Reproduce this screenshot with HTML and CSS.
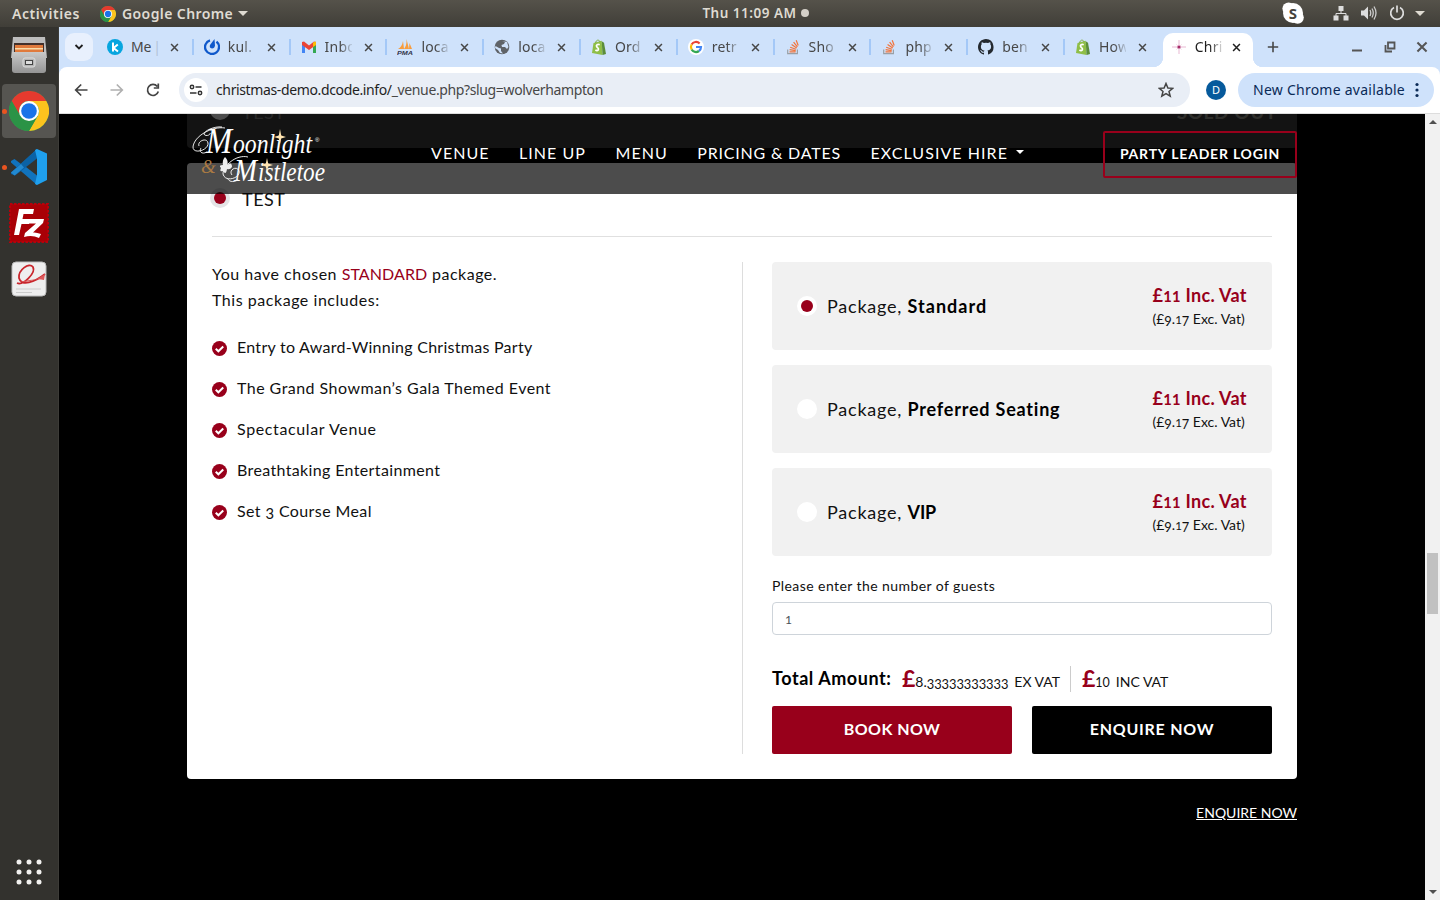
FILE: index.html
```html
<!DOCTYPE html>
<html lang="en">
<head>
<meta charset="utf-8">
<title>Moonlight &amp; Mistletoe - Wolverhampton</title>
<link rel="stylesheet" href="styles.css">
</head>
<body>
<svg class="defs" aria-hidden="true">
  <symbol id="chrome" viewBox="0 0 48 48">
    <circle cx="24" cy="24" r="24" fill="#34a04f"/>
    <path d="M3.2 12A24 24 0 0 1 44.8 12H24A12 12 0 0 0 13.6 30Z" fill="#e53a2e"/>
    <path d="M44.8 12A24 24 0 0 1 24 48L34.4 30A12 12 0 0 0 34.4 18L24 12Z" fill="#fcc31e"/>
    <path d="M3.2 12A24 24 0 0 0 24 48L34.4 30 24 34 13.6 30Z" fill="#2b9346"/>
    <circle cx="24" cy="24" r="12" fill="#fff"/><circle cx="24" cy="24" r="9.4" fill="#1a73e8"/>
  </symbol>
  <symbol id="x" viewBox="0 0 10 10"><path d="M1.2 1.2 8.8 8.8M8.8 1.2 1.2 8.8" stroke="currentColor" stroke-width="1.7"/></symbol>
  <symbol id="shop" viewBox="0 0 16 16">
    <path d="M2.5 4 10.7 1.7 11.6 16 1 14Z" fill="#8fbe47"/><path d="M10.7 2.2 13 3.8 15 15 11.6 16Z" fill="#5b8d3a"/>
    <path d="M4.6 4C5 .6 8 .2 9.2 3" fill="none" stroke="#7fae3e"/>
    <path d="M8.7 5.7C6.6 4.8 5 6 5.6 7.4 6 8.7 8 9 7.4 10.6 6.9 11.9 5.5 11.8 4.4 11" fill="none" stroke="#fff" stroke-width="1.7"/>
  </symbol>
  <symbol id="stack" viewBox="0 0 16 16">
    <path d="M2.7 10.5V14.7H12.4V10.5" fill="none" stroke="#9aa0a6" stroke-width="1.2"/>
    <path d="M4.5 12.8H10.6M4.6 10.6 10.7 11.6M5.2 8.2 11 10.3M6.6 5.6 11.7 9M8.6 3.2 12.4 7.8M11.2 1.2 13.2 6.5" stroke="#f2743c" stroke-width="1.2"/>
  </symbol>
  <symbol id="check" viewBox="0 0 16 16"><circle cx="8" cy="8" r="8" fill="#98001b"/><path d="M4 8.2 6.8 11 12 5.8" fill="none" stroke="#fff" stroke-width="2.1"/></symbol>
</svg>

<header class="topbar">
  <div class="topbar-left">
    <span class="activities">Activities</span>
    <svg width="16" height="16"><use href="#chrome"/></svg>
    <span class="app-name">Google Chrome</span>
    <i class="caret caret-light"></i>
  </div>
  <div class="clock">Thu 11:09 AM<i></i></div>
  <div class="tray">
    <svg class="skype" width="22" height="22" viewBox="0 0 22 22"><circle cx="11" cy="11" r="10" fill="#fff"/><circle cx="6.6" cy="6.6" r="6.2" fill="#fff"/><circle cx="15.6" cy="15.6" r="6.2" fill="#fff"/><text x="11" y="16.5" text-anchor="middle">S</text></svg>
    <svg width="16" height="16" viewBox="0 0 16 16"><path d="M5.5 1H10.5V6H5.5ZM.5 10.500H5.500V15.500H.5ZM10.500 10.500H15.500V15.500H10.500Z" fill="#ddd"/><path d="M8 6V8.500M3 11V8.500H13V11" fill="none" stroke="#ddd"/></svg>
    <svg width="16" height="16" viewBox="0 0 16 16"><path d="M0 5.500H3L7 1.500V14.500L3 10.500H0Z" fill="#ddd"/><path d="M9 5Q10.500 8 9 11M11 3.500Q13.500 8 11 12.500M13 1.500Q17 8 13 14.500" fill="none" stroke="#ccc" stroke-width="1.300"/></svg>
    <svg width="16" height="16" viewBox="0 0 16 16"><path d="M5 2.500A6.300 6.300 0 1 0 11 2.500M8 .5V7.500" fill="none" stroke="#ddd" stroke-width="1.700"/></svg>
    <i class="caret caret-light"></i>
  </div>
</header>

<div class="desktop">
  <aside class="dock">
    <div class="dock-item"><svg width="36" height="38" viewBox="0 0 36 38">
      <defs><linearGradient id="steel" x2="0" y2="1"><stop stop-color="#c9c9c9"/><stop offset="1" stop-color="#949494"/></linearGradient></defs>
      <path d="M2 1H34L36 22H0Z" fill="#bdbdbd"/><path d="M3 7H33V17H3Z" fill="#43302a"/><path d="M4 9H32V16H4Z" fill="#e07a3c"/><path d="M4 12H32V13.500H4Z" fill="#f9dca8"/>
      <path d="M1 16H35V34Q35 37 32 37H4Q1 37 1 34Z" fill="url(#steel)"/><rect x="12" y="22" width="12" height="9" rx="2" fill="#b5b5b5" stroke="#dedede"/><rect x="14.500" y="24.500" width="7" height="4" fill="#ddd" stroke="#444"/></svg></div>
    <div class="dock-item running active"><svg width="40" height="40"><use href="#chrome"/></svg></div>
    <div class="dock-item running"><svg width="36" height="36" viewBox="0 0 36 36"><path d="M26 0 10 15 3.500 10 0 12V13.500L26 36Z" fill="#1173bd"/><path d="M0 23.500 26 0V10L4 26.500 0 25Z" fill="#0b62a5"/><path d="M26 0 36 4.500V31L26 36 24 35 26 26V9.500L24 1Z" fill="#1fa0ee"/><path d="M26 9.500V26.500L15 18Z" fill="#33332f"/><path d="M0 23.500 10 15 13 18.500 3.500 26.500Z" fill="#2289d0"/></svg></div>
    <div class="dock-item"><svg width="40" height="40" viewBox="0 0 40 40"><rect x="1" y="1" width="38" height="38" fill="#a90006" stroke="#b9000a" stroke-width="2" stroke-dasharray="2.500 1.500"/><path d="M10 6H25L24 11H14.500L13.500 16H21L20 21H12.500L10 32H5Z" fill="#fff"/><path d="M20 16H35L34 20 24 29.500Q27 29 32 31L30 35Q23 31.500 15 34L16 30 27 20.500H19Z" fill="#fff"/></svg></div>
    <div class="dock-item"><svg width="36" height="36" viewBox="0 0 36 36"><rect x="1" y="1" width="34" height="34" rx="4" fill="#eee" stroke="#bbb"/><path d="M6 22C12 25 25 12 22 6 18 1 7 9 8 17 10 26 24 21 34 13" fill="none" stroke="#c9252b" stroke-width="1.800"/><path d="M9 21Q22 22 34 13L33 19Q25 17 9 21Z" fill="#dc5a5c"/><path d="M5 28H30M5 31.500H21" stroke="#ccc"/></svg></div>
    <svg class="apps" width="26" height="26" viewBox="0 0 26 26" fill="#f2f1ef"><circle cx="3" cy="3" r="2.500"/><circle cx="13" cy="3" r="2.500"/><circle cx="23" cy="3" r="2.500"/><circle cx="3" cy="13" r="2.500"/><circle cx="13" cy="13" r="2.500"/><circle cx="23" cy="13" r="2.500"/><circle cx="3" cy="23" r="2.500"/><circle cx="13" cy="23" r="2.500"/><circle cx="23" cy="23" r="2.500"/></svg>
  </aside>

  <div class="browser">
    <div class="tabstrip">
      <div class="tab-search"><svg width="10" height="8" viewBox="0 0 10 8"><path d="M1.500 2 5 5.500 8.500 2" fill="none" stroke="#1f1f1f" stroke-width="1.800"/></svg></div>
      <div class="tab"><svg class="fav" viewBox="0 0 16 16"><circle cx="8" cy="8" r="8" fill="#06a5df"/><path d="M6 3.500V12.500M10.800 5.500 6.500 9 11 12.500" fill="none" stroke="#fff" stroke-width="2"/></svg><span class="whole">Me<s>|</s></span><svg class="close"><use href="#x"/></svg></div>
      <div class="tab"><svg class="fav" viewBox="0 0 16 16"><path d="M6 1.300A7 7 0 1 0 12.500 2.600" fill="none" stroke="#1059cb" stroke-width="2.300"/><path d="M10.500 0 11 6.500Q10.500 9.500 8 9.500 5 9 6 6Z" fill="#1059cb"/></svg><span>kul.</span><svg class="close"><use href="#x"/></svg></div>
      <div class="tab"><svg class="fav" viewBox="0 0 16 16"><path d="M1 4V14H4V6.500Z" fill="#4285f4"/><path d="M12 6.500V14H15V4Z" fill="#34a853"/><path d="M1 3 3 2.500 8 6.500 13 2.500 15 3V6L8 11 1 6Z" fill="#ea4335"/><path d="M12 3.500 15 2.500V6L12 8Z" fill="#fbbc04"/></svg><span>Inbo</span><svg class="close"><use href="#x"/></svg></div>
      <div class="tab"><svg class="fav" viewBox="0 0 16 16"><path d="M1 10Q5 8 6 2L7 10ZM7 10Q10 6 9.500 0L12 10ZM12 10 12.500 4 15 10Z" fill="#f89c3c"/><text class="pma" x="0" y="15.800" textLength="16" lengthAdjust="spacingAndGlyphs">PMA</text></svg><span>loca</span><svg class="close"><use href="#x"/></svg></div>
      <div class="tab"><svg class="fav" viewBox="0 0 16 16"><circle cx="8" cy="8" r="7.300" fill="#5f6368"/><path d="M1.500 7 5 9 7 9.500V12L9 14.500 6 14 4 11 1 9ZM8 2 11 3 10 5 7.500 6 8 8H11L13 10 14.500 8 13 3Z" fill="#cfe2fb"/></svg><span>loca</span><svg class="close"><use href="#x"/></svg></div>
      <div class="tab"><svg class="fav"><use href="#shop"/></svg><span>Ord</span><svg class="close"><use href="#x"/></svg></div>
      <div class="tab"><svg class="fav" viewBox="0 0 16 16"><circle cx="8" cy="8" r="8" fill="#fff"/><g fill="none" stroke-width="2.200"><path d="M3.600 5.500A5 5 0 0 1 11.600 4.500" stroke="#ea4335"/><path d="M3.600 5.500A5 5 0 0 0 3.700 10.600" stroke="#fbbc04"/><path d="M3.700 10.600A5 5 0 0 0 11 12" stroke="#34a853"/><path d="M11 12A5 5 0 0 0 13 8H8" stroke="#4285f4"/></g></svg><span>retr</span><svg class="close"><use href="#x"/></svg></div>
      <div class="tab"><svg class="fav"><use href="#stack"/></svg><span>Sho</span><svg class="close"><use href="#x"/></svg></div>
      <div class="tab"><svg class="fav"><use href="#stack"/></svg><span>php</span><svg class="close"><use href="#x"/></svg></div>
      <div class="tab"><svg class="fav" viewBox="0 0 16 16"><path d="M8 0C3.600 0 0 3.600 0 8c0 3.500 2.300 6.500 5.500 7.600.4.100.5-.2.500-.4v-1.500c-2.200.5-2.700-1-2.700-1-.4-.9-.9-1.200-.9-1.200-.7-.5.1-.5.1-.5.800.1 1.200.8 1.200.8.700 1.300 1.900.9 2.300.7.100-.5.300-.9.500-1.100-1.800-.2-3.600-.9-3.600-4 0-.9.300-1.600.8-2.100-.1-.2-.4-1 .1-2.100 0 0 .7-.2 2.200.8a7.500 7.500 0 0 1 4 0c1.500-1 2.200-.8 2.200-.8.400 1.100.2 1.900.1 2.100.5.600.8 1.300.8 2.100 0 3.100-1.900 3.700-3.700 3.900.3.300.6.800.6 1.500v2.200c0 .2.100.5.500.4A8 8 0 0 0 8 0Z" fill="#24292f"/></svg><span>ben</span><svg class="close"><use href="#x"/></svg></div>
      <div class="tab nosep"><svg class="fav"><use href="#shop"/></svg><span>How</span><svg class="close"><use href="#x"/></svg></div>
      <div class="tab current"><svg class="fav" viewBox="0 0 16 16"><path d="M8 1V15M1 8H15" stroke="#e9b9d3"/><path d="M5.500 5.500 10.500 10.500M10.500 5.500 5.500 10.500" stroke="#e9c0d6" stroke-width=".7"/><circle cx="8" cy="8" r="1.600" fill="#a52a68"/></svg><span>Chri</span><svg class="close"><use href="#x"/></svg></div>
      <svg class="new-tab" width="12" height="12" viewBox="0 0 12 12"><path d="M6 .8V11.200M.8 6H11.200" stroke="#474747" stroke-width="1.600"/></svg>
      <div class="win">
        <svg width="12" height="12" viewBox="0 0 12 12"><path d="M1 9.500H11" stroke="#555" stroke-width="2"/></svg>
        <svg width="12" height="12" viewBox="0 0 12 12"><path d="M4 1.500H10.500V7.500H4ZM1.500 4V10.500H8" fill="none" stroke="#555" stroke-width="1.800"/></svg>
        <svg width="12" height="12" viewBox="0 0 10 10"><use href="#x"/></svg>
      </div>
    </div>
    <div class="toolbar">
      <svg class="nav-ic" viewBox="0 0 16 16"><path d="M14.500 8H3M8.200 2.500 2.700 8 8.200 13.500" fill="none" stroke="#444" stroke-width="1.700"/></svg>
      <svg class="nav-ic" viewBox="0 0 16 16"><path d="M1.500 8H13M7.800 2.500 13.300 8 7.800 13.500" fill="none" stroke="#b0b0b0" stroke-width="1.700"/></svg>
      <svg class="nav-ic" viewBox="0 0 16 16"><path d="M13.300 9.500A5.500 5.500 0 1 1 12.300 4.500M13.300 1.500V6H8.800" fill="none" stroke="#444" stroke-width="1.700"/></svg>
      <div class="omnibox">
        <div class="site-info"><svg width="14" height="12" viewBox="0 0 14 12"><g fill="none" stroke="#333" stroke-width="1.500"><circle cx="3" cy="3" r="1.700"/><path d="M6.500 3H12.500M1 9H7.500"/><circle cx="11" cy="9" r="1.700"/></g></svg></div>
        <span class="url">christmas-demo.dcode.info/<b>_venue.php?slug=wolverhampton</b></span>
        <svg width="16" height="16" viewBox="0 0 16 16"><path d="M8 1.500 9.900 6 14.700 6.300 11 9.400 12.200 14.200 8 11.600 3.800 14.200 5 9.400 1.300 6.300 6.100 6Z" fill="none" stroke="#444" stroke-width="1.500"/></svg>
      </div>
      <div class="avatar">D</div>
      <div class="update"><span>New Chrome available</span><svg width="4" height="16" viewBox="0 0 4 16" fill="#0a2a57"><circle cx="2" cy="2.500" r="1.600"/><circle cx="2" cy="8" r="1.600"/><circle cx="2" cy="13.500" r="1.600"/></svg></div>
    </div>

    <div class="viewport">
      <main class="page">
        <section class="card sold">
          <i class="radio"></i><span>TEST</span><b>SOLD OUT</b>
        </section>
        <section class="card">
          <div class="date-row"><i class="radio grey on"></i><span>TEST</span></div>
          <div class="columns">
            <div class="includes">
              <p><span class="l1">You have chosen <em>STANDARD</em> package.</span><br><span class="l2">This package includes:</span></p>
              <ul>
                <li><svg><use href="#check"/></svg><span class="i1">Entry to Award-Winning Christmas Party</span></li>
                <li><svg><use href="#check"/></svg><span class="i2">The Grand Showman’s Gala Themed Event</span></li>
                <li><svg><use href="#check"/></svg><span class="i3">Spectacular Venue</span></li>
                <li><svg><use href="#check"/></svg><span class="i4">Breathtaking Entertainment</span></li>
                <li><svg><use href="#check"/></svg><span class="i5">Set <small class="low">3</small> Course Meal</span></li>
              </ul>
            </div>
            <div class="booking">
              <div class="package"><i class="radio on"></i><span class="name">Package, <b class="n1">Standard</b></span><div class="price"><b>£<small>11</small> Inc. Vat</b><span>(£<small class="low">9</small>.<small>1</small><small class="low">7</small> Exc. Vat)</span></div></div>
              <div class="package"><i class="radio"></i><span class="name">Package, <b class="n2">Preferred Seating</b></span><div class="price"><b>£<small>11</small> Inc. Vat</b><span>(£<small class="low">9</small>.<small>1</small><small class="low">7</small> Exc. Vat)</span></div></div>
              <div class="package"><i class="radio"></i><span class="name">Package, <b class="n3">VIP</b></span><div class="price"><b>£<small>11</small> Inc. Vat</b><span>(£<small class="low">9</small>.<small>1</small><small class="low">7</small> Exc. Vat)</span></div></div>
              <label class="guests"><span>Please enter the number of guests</span><span class="field"><small>1</small></span></label>
              <div class="total">
                <strong>Total Amount:</strong>
                <span class="ex"><b>£</b><span class="amount">8.<small class="low">33333333333</small></span><span class="unit">EX VAT</span></span>
                <span class="inc"><b>£</b><small class="ten">10</small><span class="unit">INC VAT</span></span>
              </div>
              <div class="actions"><a class="book">BOOK NOW</a><a class="enquire">ENQUIRE NOW</a></div>
            </div>
          </div>
        </section>
        <a class="enquire-link">ENQUIRE NOW</a>

        <nav class="site-nav">
          <svg class="logo" width="136" height="64" viewBox="0 0 136 64">
            <g fill="none" stroke="#fff" stroke-width=".9"><path d="M33 6C20 4 2 14 1 25 1 33 17 28 16 21 15 15 5 19 7 24M15 30C9 33 7 29 9 26M30 5C22 4 12 9 12 12 13 15 19 13 18 11"/><path d="M56 35C44 32 31 44 31 52 33 61 49 56 47 49 45 43 36 48 40 53M46 58C40 61 37 59 36 57"/></g>
            <text class="script" x="14" y="31"><tspan class="cap" textLength="26" lengthAdjust="spacingAndGlyphs">M</tspan><tspan x="41" textLength="79" lengthAdjust="spacingAndGlyphs">oonlight</tspan></text>
            <text class="script" x="42" y="59"><tspan class="cap two" textLength="23" lengthAdjust="spacingAndGlyphs">M</tspan><tspan x="66" textLength="67" lengthAdjust="spacingAndGlyphs">istletoe</tspan></text>
            <text class="amp" x="9" y="51">&amp;</text><text class="reg" x="123" y="20">®</text>
            <path d="M33 35Q37 39 35 43 40 39 40 45 38 48 35 47 34 54 31 49 27 50 29 46 26 43 31 43Q30 38 33 35Z" fill="#eee"/>
            <g fill="#ffe4b0"><path d="M88 7 89.200 13.500 94 15 89.200 16.500 88 22 86.800 16.500 82 15 86.800 13.500Z"/><path d="M75 36 76.200 41.500 81 43 76.200 44.500 75 50 73.800 44.500 69 43 73.800 41.500Z"/></g>
          </svg>
          <div class="links"><a>VENUE</a><a>LINE UP</a><a>MENU</a><a class="pricing">PRICING &amp; DATES</a><a>EXCLUSIVE HIRE<i class="caret"></i></a></div>
          <a class="login">PARTY LEADER LOGIN</a>
        </nav>
      </main>
      <div class="scrollbar"><i class="up"></i><div class="thumb"></div><i class="down"></i></div>
    </div>
  </div>
</div>
</body>
</html>
```
FILE: styles.css
```css
* { box-sizing: border-box; }
body { margin: 0; width: 1440px; height: 900px; overflow: hidden; background: #000; font-family: "Noto Sans", sans-serif; display: flex; flex-direction: column; }
svg { display: block; flex: none; }
.defs { display: none; }
i { font-style: normal; }

/* desktop top bar */
.topbar { height: 27px; flex: none; display: grid; grid-template-columns: 1fr auto 1fr; align-items: center; background: linear-gradient(#55524a, #403e38); color: #dfdbd2; font: 600 14px "Noto Sans", sans-serif; }
.topbar-left { display: flex; align-items: center; padding-left: 12px; }
.activities { width: 88px; letter-spacing: .55px; }
.app-name { margin-left: 6px; letter-spacing: .4px; }
.caret { width: 0; height: 0; border: 4px solid transparent; border-top-color: currentColor; border-bottom: 0; }
.caret-light { border-width: 5px 5px 0; margin-left: 5px; }
.clock { display: flex; align-items: center; gap: 4px; margin-left: 71px; font-size: 13.5px; letter-spacing: .5px; white-space: nowrap; margin-top: -1px; }
.clock i { width: 8px; height: 8px; border-radius: 50%; background: #d4d0c8; }
.tray { display: flex; align-items: center; justify-content: flex-end; padding-right: 15px; gap: 12px; margin-top: -1px; }
.tray .skype { margin-right: 17px; }
.tray .caret { margin-left: -2px; }
.skype text { font: 700 15px "Noto Sans", sans-serif; fill: #45433c; }

/* dock */
.desktop { flex: 1; display: flex; min-height: 0; }
.dock { width: 59px; flex: none; background: #33322e; border-right: 1px solid #3d3c38; display: flex; flex-direction: column; align-items: center; gap: 2px; padding-top: 1px; }
.dock-item { width: 54px; height: 54px; border-radius: 4px; display: flex; align-items: center; justify-content: center; position: relative; }
.dock-item.active { background: #565551; }
.running::before { content: ""; position: absolute; left: 0; top: 25px; width: 5px; height: 5px; border-radius: 50%; background: #e95420; }
.apps { margin-top: auto; margin-bottom: 15px; }

/* browser */
.browser { flex: 1; display: flex; flex-direction: column; min-width: 0; background: #cfe2fb; }
.tabstrip { height: 40px; flex: none; display: flex; align-items: center; padding-left: 6px; }
.tab-search { width: 28px; height: 28px; border-radius: 9px; background: #e8f0fd; display: flex; align-items: center; justify-content: center; margin-right: 4px; }
.tab { width: 96.8px; flex: none; height: 34px; margin-top: 6px; padding: 0 0 6px 10px; display: flex; align-items: center; position: relative; color: #474747; }
.tab::after { content: ""; position: absolute; right: 0; top: 6px; width: 2px; height: 16px; background: #a4c8f7; }
.tab.nosep::after, .tab.current::after { display: none; }
.tab .fav { width: 16px; height: 16px; }
.tab span { width: 27px; margin: -1px 12px 0 8px; overflow: hidden; white-space: nowrap; font-size: 14px; letter-spacing: .2px; -webkit-mask: linear-gradient(90deg, #000 55%, rgba(0, 0, 0, .15)); mask: linear-gradient(90deg, #000 55%, rgba(0, 0, 0, .15)); }
.tab span.whole { -webkit-mask: none; mask: none; letter-spacing: -.2px; width: 33px; margin-right: 6px; }
.tab s { text-decoration: none; color: #b3c2d6; margin-left: 2px; }
.tab .close { width: 9px; height: 9px; }
.tab.current { width: 90px; margin-left: 1px; padding-left: 8px; background: #fff; border-radius: 10px 10px 0 0; color: #1f1f1f; }
.tab.current .close { margin-left: -1.500px; }
.tab.current::before { content: ""; position: absolute; left: -10px; right: -10px; bottom: 0; height: 10px; background: radial-gradient(circle at 0 0, transparent 10px, #fff 10.5px) left / 10px 10px no-repeat, radial-gradient(circle at 100% 0, transparent 10px, #fff 10.5px) right / 10px 10px no-repeat; }
.pma { font: italic 700 6px "Liberation Sans", sans-serif; fill: #33354c; }
.new-tab { margin-left: 14px; }
.win { display: flex; gap: 20.500px; margin-left: auto; margin-right: 12px; color: #555; }
.toolbar { height: 47px; flex: none; display: flex; align-items: center; background: #fff; border-bottom: 1px solid #ddd; border-radius: 8px 8px 0 0; padding: 0 6px 0 14px; }
.nav-ic { width: 16px; height: 16px; margin-right: 20px; }
.omnibox { width: 1011px; height: 34px; margin-left: -2px; border-radius: 17px; background: #e9eef6; display: flex; align-items: center; padding: 0 16px 0 5px; }
.site-info { width: 24px; height: 24px; border-radius: 50%; background: #fff; display: flex; align-items: center; justify-content: center; }
.url { flex: 1; margin: -2px 0 0 8px; font: 14px "Noto Sans", sans-serif; letter-spacing: -.37px; color: #1f1f1f; }
.url b { font-weight: 400; color: #474747; }
.avatar { width: 20px; height: 20px; margin: 0 12px 0 16px; border-radius: 50%; background: #065a9c; color: #fff; font-size: 11px; line-height: 20px; text-align: center; }
.update { flex: 1; height: 34px; border-radius: 17px; background: #cfe2fb; color: #0a2a57; display: flex; align-items: center; justify-content: space-between; padding: 0 15px; font-size: 14px; letter-spacing: .25px; white-space: nowrap; }
.update span { margin-top: -2px; }

/* web page */
.viewport { flex: 1; display: flex; min-height: 0; background: #000; }
.page { flex: 1; padding: 0 128px; position: relative; font-family: Lato, sans-serif; color: #111; overflow: hidden; }
.card { background: #fff; border-radius: 4px; padding: 25px; height: 616px; }
.card.sold { position: relative; height: 34px; background: #424242; border-radius: 0 0 4px 4px; margin-bottom: 15px; padding: 0; display: flex; overflow: hidden; font-size: 18px; line-height: 20px; color: #858585; }
.sold .radio { margin: -14px 12px 0 23px; }
.sold span { margin-top: -12px; letter-spacing: .5px; }
.sold b { margin: -12px 20px 0 auto; font-size: 19px; letter-spacing: .6px; color: #999990; }
.radio { width: 20px; height: 20px; flex: none; border-radius: 50%; background: #fff; display: flex; align-items: center; justify-content: center; }
.radio.grey { background: #e4e4e6; }
.radio.on::after { content: ""; width: 12px; height: 12px; border-radius: 50%; background: #98001b; }
small { font-size: .82em; }
small.low { font-size: .92em; vertical-align: -.14em; line-height: 0; }
.date-row { height: 49px; border-bottom: 1px solid #e0e0e0; display: flex; gap: 12px; font-size: 18px; line-height: 22px; letter-spacing: .5px; }
.date-row .radio { margin-left: -2px; }
.columns { display: flex; margin-top: 25px; height: 492px; }
.includes { width: 531px; border-right: 1px solid #ddd; font-size: 16px; line-height: 26px; }
.includes p { margin: -1px 0 21px; }
.includes em { font-style: normal; color: #98001b; letter-spacing: .1px; }
.l1 { letter-spacing: .5px; }
.l2 { letter-spacing: .54px; }
.i1 { letter-spacing: .27px; }
.i2 { letter-spacing: .46px; }
.i3 { letter-spacing: .63px; }
.i4 { letter-spacing: .36px; }
.i5 { letter-spacing: .4px; }
.includes ul { list-style: none; margin: 0; padding: 0; display: flex; flex-direction: column; gap: 15px; }
.includes li { display: flex; align-items: center; gap: 10px; }
.includes li svg { width: 15px; height: 15px; margin-top: 2px; }
.booking { width: 500px; margin-left: 29px; display: flex; flex-direction: column; }
.package { height: 88px; margin-bottom: 15px; background: #f1f1f1; border-radius: 4px; display: flex; align-items: center; padding: 0 25px; }
.package .name { margin-left: 10px; font-size: 18px; letter-spacing: .78px; flex: 1; }
.package .name b { color: #000; }
.package .n1 { letter-spacing: 1px; }
.package .n2 { letter-spacing: .78px; }
.package .n3 { letter-spacing: -.2px; }
.price { width: 94.500px; display: flex; flex-direction: column; white-space: nowrap; }
.price b { color: #98001b; font-size: 18px; line-height: 24px; letter-spacing: .28px; margin-top: 1px; }
.price span { font-size: 14px; line-height: 22px; margin-bottom: -1px; }
.guests { font-size: 14px; line-height: 20px; letter-spacing: .43px; margin-top: 5px; display: flex; flex-direction: column; gap: 6px; }
.field { height: 33px; border: 1px solid #ced4da; border-radius: 4px; padding: 6px 12px; color: #495057; }
.field small { font-size: 12px; }
.total { height: 26px; margin: 31px 0 14px; display: flex; align-items: center; white-space: nowrap; }
.total strong { font-size: 18px; color: #000; width: 130px; margin-top: -3px; letter-spacing: .55px; }
.total > span { display: flex; align-items: baseline; font-size: 14px; line-height: 24px; height: 26px; }
.total span b { font-size: 23px; color: #98001b; }
.total .ex { width: 169px; border-right: 1px solid #ccc; margin-right: 11px; }
.amount { width: 93px; }
.amount .low { letter-spacing: -.05px; }
.ten { font-size: 12.500px; }
.unit { margin-left: 6px; }
.actions { display: flex; gap: 20px; }
.actions a { width: 240px; height: 48px; border-radius: 2px; color: #fff; font-weight: 700; font-size: 16px; line-height: 45px; letter-spacing: .45px; text-align: center; }
.book { background: #98001b; }
.actions .enquire { background: #000; letter-spacing: .75px; }
.enquire-link { display: block; margin-top: 24px; text-align: right; font-size: 14px; line-height: 20px; color: #fff; text-decoration: underline; }

/* translucent site bar lying over the scrolled content */
.site-nav { position: absolute; left: 128px; right: 128px; top: 0; height: 80px; background: rgba(0, 0, 0, .7); color: #fff; display: flex; align-items: center; }
.logo { margin-left: 5px; }
.script { font: italic 28px "Liberation Serif", serif; fill: #fff; }
.cap { font-size: 35px; }
.cap.two { font-size: 32px; }
.amp { font: italic 19px "Liberation Serif", serif; fill: #aa7a43; }
.reg { font: 6px "Liberation Sans", sans-serif; fill: #fff; }
.links { display: flex; gap: 29.500px; margin: -4px 0 0 103px; font-size: 16px; letter-spacing: 1.050px; white-space: nowrap; }
.links a { display: flex; align-items: center; }
.links .pricing { letter-spacing: .8px; }
.links .caret { margin-left: 8px; }
.login { margin-left: auto; width: 194px; height: 47px; border: 2px solid #98001b; border-radius: 2px; text-align: center; line-height: 41px; font-size: 14px; font-weight: 700; letter-spacing: .78px; white-space: nowrap; margin-top: 1px; }

.scrollbar { width: 15px; flex: none; background: #f1f1f1; display: flex; flex-direction: column; align-items: center; padding: 6px 0; }
.thumb { width: 11px; height: 61px; margin-top: 429px; background: #c1c1c1; }
.up { border: 4px solid transparent; border-top: 0; border-bottom-color: #505050; }
.down { border: 4px solid transparent; border-bottom: 0; border-top-color: #505050; margin-top: auto; }
```
